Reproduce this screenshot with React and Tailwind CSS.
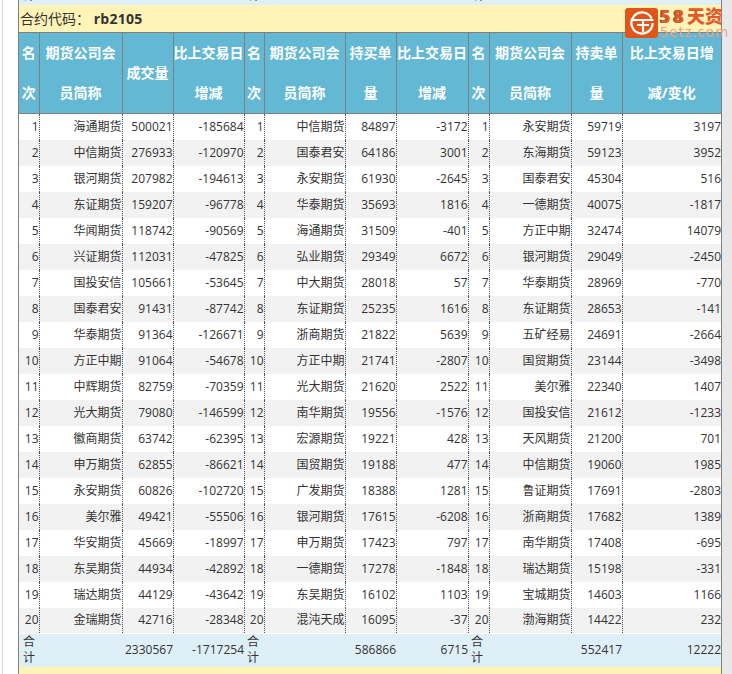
const widths = [20, 83, 51, 71, 20, 81, 51, 72, 21, 82, 51, 99];
const rows = [
  ["海通期货",500021,-185684,"中信期货",84897,-3172,"永安期货",59719,3197],
  ["中信期货",276933,-120970,"国泰君安",64186,3001,"东海期货",59123,3952],
  ["银河期货",207982,-194613,"永安期货",61930,-2645,"国泰君安",45304,516],
  ["东证期货",159207,-96778,"华泰期货",35693,1816,"一德期货",40075,-1817],
  ["华闻期货",118742,-90569,"海通期货",31509,-401,"方正中期",32474,14079],
  ["兴证期货",112031,-47825,"弘业期货",29349,6672,"银河期货",29049,-2450],
  ["国投安信",105661,-53645,"中大期货",28018,57,"华泰期货",28969,-770],
  ["国泰君安",91431,-87742,"东证期货",25235,1616,"东证期货",28653,-141],
  ["华泰期货",91364,-126671,"浙商期货",21822,5639,"五矿经易",24691,-2664],
  ["方正中期",91064,-54678,"方正中期",21741,-2807,"国贸期货",23144,-3498],
  ["中辉期货",82759,-70359,"光大期货",21620,2522,"美尔雅",22340,1407],
  ["光大期货",79080,-146599,"南华期货",19556,-1576,"国投安信",21612,-1233],
  ["徽商期货",63742,-62395,"宏源期货",19221,428,"天风期货",21200,701],
  ["申万期货",62855,-86621,"国贸期货",19188,477,"中信期货",19060,1985],
  ["永安期货",60826,-102720,"广发期货",18388,1281,"鲁证期货",17691,-2803],
  ["美尔雅",49421,-55506,"银河期货",17615,-6208,"浙商期货",17682,1389],
  ["华安期货",45669,-18997,"申万期货",17423,797,"南华期货",17408,-695],
  ["东吴期货",44934,-42892,"一德期货",17278,-1848,"瑞达期货",15198,-331],
  ["瑞达期货",44129,-43642,"东吴期货",16102,1103,"宝城期货",14603,1166],
  ["金瑞期货",42716,-28348,"混沌天成",16095,-37,"渤海期货",14422,232],
];
const heads = [
  ["名次","期货公司会员简称","成交量","比上交易日增减"],
  ["名次","期货公司会员简称","持买单量","比上交易日增减"],
  ["名次","期货公司会员简称","持卖单量","比上交易日增减/变化"],
];
const th = "border border-[#808080] first:border-l-0 last:border-r-0 bg-[#63b8d4] text-white font-bold text-[14px] leading-[40px] text-center p-0 align-middle";
const td = "border-r border-dotted border-r-[#555] text-right text-[12px] text-[#333] p-0";
const tf = "text-right text-[12px] leading-[16px] text-[#333] p-0 align-middle";
const tl = "text-left text-[12px] leading-[16px] text-[#333] align-middle py-0 pr-0";

function Logo() {
  return (
    <div className="absolute left-[625px] top-[8px] w-[102px] h-[30px] flex items-center gap-[2px]">
      <div className="w-[33px] h-[30px] rounded-[3px] bg-[#e0561a] flex items-center justify-center shrink-0">
        <svg width="26" height="26" viewBox="0 0 26 26" fill="none" stroke="#fff" strokeWidth="2.2">
          <path d="M22.6 8.5A10.6 10.6 0 1 0 23.6 13" />
          <path d="M3.5 10h21M8 15h12M14 10v12" />
        </svg>
      </div>
      <div className="flex flex-col items-start w-[67px]">
        <span className="text-[18px] leading-[17px] font-black text-[#e2592a] whitespace-nowrap">
          <span className="tracking-[3px] [text-shadow:-1px_0_0_#6b5a3a]">58</span>天资
        </span>
        <span className="text-[14px] leading-[13px] text-[#f0a080] tracking-[1.3px] whitespace-nowrap">5etz.com</span>
      </div>
    </div>
  );
}

export default function App() {
  return (
    <div className="relative w-[732px] h-[674px] overflow-hidden bg-white font-['Open_Sans','Noto_Sans_CJK_SC',sans-serif] flex">
      <div className="w-[2px] shrink-0 bg-white" />
      <div className="w-px shrink-0 bg-[#d8d8d8]" />
      <div className="w-[15px] shrink-0 bg-white" />
      <div className="w-[704px] shrink-0 border-l border-r border-[#808080]">
        <div className="h-[5px] bg-[#dfeff8] overflow-hidden">
          <div className="flex text-[12px] text-[#333] leading-[16px] -mt-[12px] pl-[4px]">
            <span className="w-[225px]">计</span><span className="w-[225px]">计</span><span>计</span>
          </div>
        </div>
        <div className="h-[27px] bg-[#fff3b8] text-[14px] text-[#333] leading-[27px] pl-[1px]">
          合约代码： <b className="font-bold tracking-[0.3px]">rb2105</b>
        </div>
        <table className="table-fixed border-collapse w-[702px]">
          <colgroup>
            {widths.map((w, i) => <col key={i} style={{ width: w }} />)}
          </colgroup>
          <thead>
            <tr className="h-[81px]">
              {heads.flat().map((h, i) => <th key={i} className={th}>{h}</th>)}
            </tr>
          </thead>
          <tbody>
            {rows.map((r, i) => (
              <tr key={i} className={`h-[26px] ${i % 2 ? "bg-[#f2f2f2]" : "bg-white"}`}>
                <td className={td}>{i + 1}</td><td className={td}>{r[0]}</td><td className={td}>{r[1]}</td><td className={td}>{r[2]}</td>
                <td className={td}>{i + 1}</td><td className={td}>{r[3]}</td><td className={td}>{r[4]}</td><td className={td}>{r[5]}</td>
                <td className={td}>{i + 1}</td><td className={td}>{r[6]}</td><td className={td}>{r[7]}</td><td className="text-right text-[12px] text-[#333] p-0">{r[8]}</td>
              </tr>
            ))}
            <tr className="h-[33px] bg-[#dfeff8] border-t border-white">
              <td className={`${tl} pl-[4px]`}>合计</td><td /><td className={tf}>2330567</td><td className={tf}>-1717254</td>
              <td className={`${tl} pl-[3px]`}>合计</td><td /><td className={tf}>586866</td><td className={tf}>6715</td>
              <td className={`${tl} pl-[3px]`}>合计</td><td /><td className={tf}>552417</td><td className={tf}>12222</td>
            </tr>
          </tbody>
        </table>
        <div className="h-[20px] bg-[#fff3b8]" />
      </div>
      <div className="flex-1 bg-[#e8e8e8]" />
      <Logo />
    </div>
  );
}
